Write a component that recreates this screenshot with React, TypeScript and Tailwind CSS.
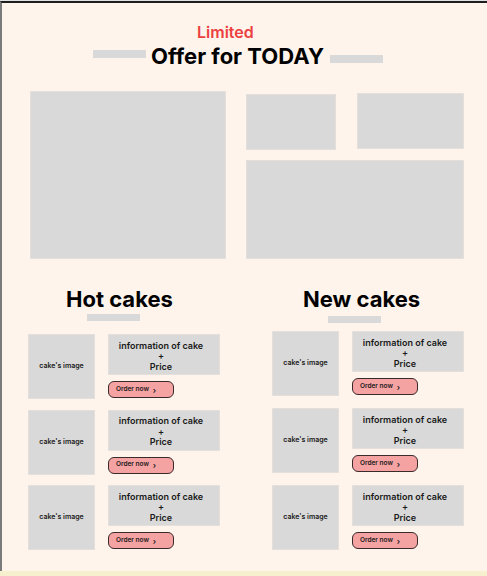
import React from 'react';

const CakeRow: React.FC = () => (
  <div className="flex">
    <div className="w-[67px] h-[65px] bg-[#d9d9d9] border border-[#e4dfda] flex items-center justify-center">
      <span className="text-[7px] font-semibold text-[#1a1a1a]">cake's image</span>
    </div>
    <div className="ml-[13px] flex flex-col">
      <div className="w-[112px] h-[41px] bg-[#d9d9d9] border border-[#e4dfda] flex flex-col items-center justify-center pt-[4px] pr-[6px] text-[9px] leading-[10.5px] font-semibold text-[#1a1a1a]">
        <span>information of cake</span>
        <span>+</span>
        <span>Price</span>
      </div>
      <button className="mt-[6px] w-[66px] h-[17px] bg-[#f5a2a2] border border-[#3a2a2a] rounded-[6px] flex items-center pl-[7px] text-[6.5px] font-semibold text-[#1a1a1a]">
        Order now <span className="ml-[4px] text-[8px] leading-none">›</span>
      </button>
    </div>
  </div>
);

interface CakeColumnProps {
  title: string;
  headingMl: string;
  barClass: string;
  listClass: string;
}

const CakeColumn: React.FC<CakeColumnProps> = ({ title, headingMl, barClass, listClass }) => (
  <div className="flex flex-col w-[192px]">
    <h2 className={`${headingMl} text-[22px] leading-[26px] font-bold text-black`}>{title}</h2>
    <div className={`${barClass} w-[53px] h-[7px] bg-[#d9d9d9]`}></div>
    <div className={`${listClass} flex flex-col`}>
      <CakeRow />
      <CakeRow />
      <CakeRow />
    </div>
  </div>
);

export default function App() {
  return (
    <div className="w-[487px] h-[576px] overflow-hidden flex flex-col font-['Inter',sans-serif]">
      <div className="h-px bg-[#e2e2e2]"></div>
      <div className="flex-1 bg-[#fef4ec] border-t-2 border-l-2 border-t-[#1e1e1e] border-l-[#7a7a7a] flex flex-col">
        <div className="ml-[195px] mt-[20px] text-[16px] leading-[18px] font-semibold text-[#ec3f3f]">Limited</div>

        <div className="ml-[91px] mt-[3px] flex items-start">
          <div className="mt-[6px] w-[53px] h-[8px] bg-[#d9d9d9]"></div>
          <h1 className="ml-[5px] text-[22px] leading-[24px] font-bold text-black">Offer for TODAY</h1>
          <div className="ml-[6px] mt-[11px] w-[53px] h-[8px] bg-[#d9d9d9]"></div>
        </div>

        <div className="ml-[28px] mt-[23px] flex items-start">
          <div className="w-[196px] h-[168px] bg-[#d9d9d9] border border-[#e4dfda]"></div>
          <div className="ml-[20px] flex flex-col">
            <div className="flex items-start">
              <div className="mt-[3px] w-[90px] h-[56px] bg-[#d9d9d9] border border-[#e4dfda]"></div>
              <div className="ml-[21px] mt-[2px] w-[107px] h-[56px] bg-[#d9d9d9] border border-[#e4dfda]"></div>
            </div>
            <div className="mt-[10px] w-[218px] h-[99px] bg-[#d9d9d9] border border-[#e4dfda]"></div>
          </div>
        </div>

        <div className="ml-[26px] mt-[27px] flex items-start">
          <CakeColumn title="Hot cakes" headingMl="ml-[38px]" barClass="ml-[59px] mt-[2px]" listClass="mt-[13px] gap-[10.5px]" />
          <div className="ml-[52px]">
            <CakeColumn title="New cakes" headingMl="ml-[31px]" barClass="ml-[56px] mt-[4px]" listClass="mt-[8px] gap-[12px]" />
          </div>
        </div>
      </div>
      <div className="h-[5px] bg-[#f6f0cf]"></div>
    </div>
  );
}
